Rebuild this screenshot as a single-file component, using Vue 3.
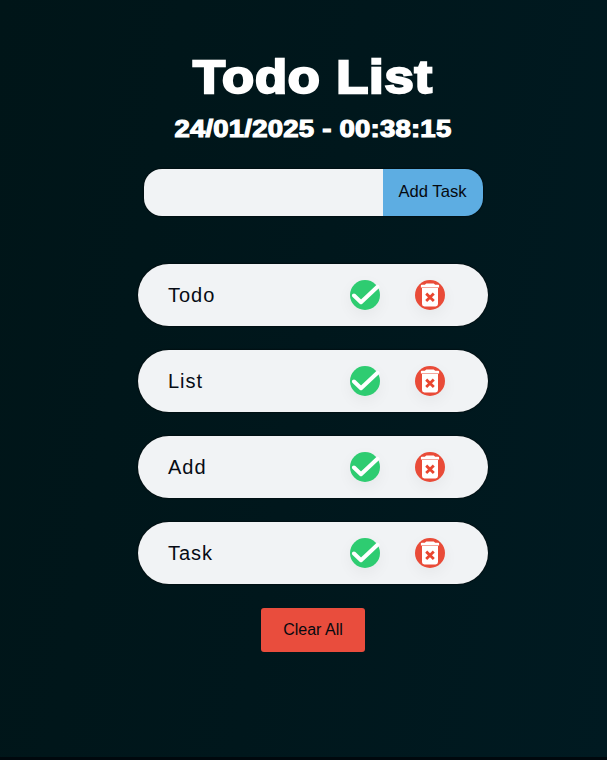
<script setup>
import { ref } from 'vue'

const tasks = ref(['Todo', 'List', 'Add', 'Task'])
const draft = ref('')

function addTask() {
  const name = draft.value.trim()
  if (name) tasks.value.push(name)
  draft.value = ''
}
</script>

<template>
  <main class="page">
    <h1 class="title">Todo List</h1>
    <p class="clock">24/01/2025 - 00:38:15</p>
    <form class="entry" @submit.prevent="addTask">
      <input v-model="draft" class="field" type="text" />
      <button class="add" type="submit">Add Task</button>
    </form>
    <ul class="list">
      <li v-for="(task, i) in tasks" :key="i" class="task">
        <span class="name">{{ task }}</span>
        <button class="icon done" type="button">
          <svg viewBox="0 0 30 30" width="30" height="30">
            <path d="M4 15.5L11 22.2L27.5 6.8" fill="none" stroke="#fff" stroke-width="4" stroke-linecap="round" stroke-linejoin="round" />
          </svg>
        </button>
        <button class="icon remove" type="button" @click="tasks.splice(i, 1)">
          <svg viewBox="0 0 30 30" width="30" height="30">
            <path d="M6.8 4.8H9.8L11.3 3.4H18.7L20.2 4.8H23.2Q24.1 4.8 24.1 5.6V7.5H5.9V5.6Q5.9 4.8 6.8 4.8Z" fill="#fff" />
            <path d="M7 8.1H23V24Q23 26.4 20.6 26.4H9.4Q7 26.4 7 24Z" fill="#fff" />
            <path d="M12.2 14.6L17.8 20M17.8 14.6L12.2 20" fill="none" stroke="#e9452f" stroke-width="2.8" stroke-linecap="square" />
          </svg>
        </button>
      </li>
    </ul>
    <button class="clear" type="button" @click="tasks = []">Clear All</button>
  </main>
</template>

<style>
body {
  background: #00080d;
}
</style>

<style scoped>
.page {
  box-sizing: border-box;
  height: 757px;
  padding: 48px 0 0 19px;
  display: flex;
  flex-direction: column;
  align-items: center;
  background: linear-gradient(100deg, #001518 0%, #00171c 50%, #001a21 100%);
  font-family: "Liberation Sans", Arial, sans-serif;
}
.title,
.clock {
  margin: 0;
  color: #fff;
  font-family: "Arial Black", "Liberation Sans", sans-serif;
  font-weight: 900;
  white-space: nowrap;
}
.title {
  font-size: 46px;
  line-height: 58px;
  letter-spacing: 0.7px;
  -webkit-text-stroke: 2.3px #fff;
  transform: scaleX(1.142);
}
.clock {
  margin-top: 8px;
  font-size: 23px;
  line-height: 30px;
  letter-spacing: 0.2px;
  -webkit-text-stroke: 1.1px #fff;
  transform: scaleX(1.195);
}
.entry {
  display: flex;
  width: 339px;
  height: 47px;
  margin-top: 25px;
  border-radius: 18px;
  overflow: hidden;
  box-shadow: 0 0 2px #000;
}
button {
  padding: 0;
  border: 0;
  color: #05090f;
  font-family: inherit;
  font-size: 16px;
}
.field {
  flex: 1;
  min-width: 0;
  padding: 0 20px;
  border: 0;
  background: #f1f3f5;
  font-family: inherit;
  font-size: 16px;
}
.add {
  width: 100px;
  padding-bottom: 2px;
  background: #5dade2;
  font-size: 16.6px;
}
.list {
  display: flex;
  flex-direction: column;
  gap: 24px;
  margin: 48px 0 0;
  padding: 0;
  list-style: none;
}
.task {
  box-sizing: border-box;
  display: flex;
  align-items: center;
  gap: 35px;
  width: 350px;
  height: 62px;
  padding: 0 43px 0 30px;
  border-radius: 31px;
  background: #f1f3f5;
  box-shadow: 0 0 2px #000;
}
.name {
  flex: 1;
  color: #060b14;
  font-size: 20px;
  letter-spacing: 1px;
}
.icon {
  display: block;
  width: 30px;
  height: 30px;
  border-radius: 50%;
  box-shadow: 0 5px 15px rgba(0, 0, 0, 0.05);
}
.icon svg {
  display: block;
}
.done {
  background: #2ecc71;
}
.remove {
  background: #e94b38;
}
.clear {
  width: 104px;
  height: 44px;
  margin-top: 24px;
  border-radius: 3px;
  background: #e94d3d;
}
</style>
